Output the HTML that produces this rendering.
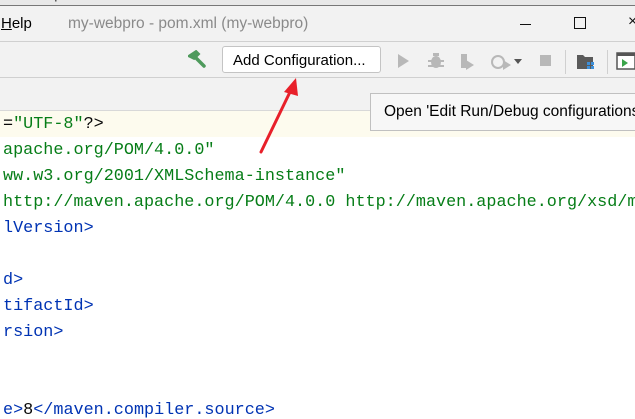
<!DOCTYPE html>
<html><head><meta charset="utf-8"><style>
*{margin:0;padding:0;box-sizing:border-box}
html,body{overflow:hidden}
body{width:635px;height:419px;background:#fff;position:relative;font-family:"Liberation Sans",sans-serif}
.abs{position:absolute}
.clip{position:absolute;left:0;top:111px;width:635px;height:308px;overflow:hidden}
.code{position:absolute;left:3px;top:1px;font-family:"Liberation Mono",monospace;font-size:16.8px;white-space:pre;line-height:26px}
.g{color:#067d17}.b{color:#0033b3}.k{color:#080808}
</style></head><body>
<div class="abs" style="left:0;top:0;width:635px;height:5px;background:#e8e8e8;overflow:hidden"><div style="position:absolute;top:-17px;left:0;font-size:17px;color:#555">is.com/posts/edit</div></div>
<div class="abs" style="left:0;top:5px;width:635px;height:1px;background:#777"></div>
<div class="abs" style="left:0;top:6px;width:635px;height:35px;background:#f2f2f2"></div>
<div class="abs" style="left:1px;top:15px;font-size:15px;color:#000"><u>H</u>elp</div>
<div class="abs" style="left:68px;top:15px;font-size:15.5px;color:#8a8a8a">my-webpro - pom.xml (my-webpro)</div>
<div class="abs" style="left:520px;top:24px;width:11px;height:1px;background:#111"></div>
<div class="abs" style="left:574px;top:17px;width:12px;height:12px;border:1.3px solid #111"></div>
<div class="abs" style="left:628px;top:13px;width:7px;overflow:hidden;font-size:16px;color:#111">×</div>
<div class="abs" style="left:0;top:41px;width:635px;height:1px;background:#d0d0d0"></div>
<div class="abs" style="left:0;top:42px;width:635px;height:35px;background:#f2f2f2"></div>
<svg class="abs" style="left:188px;top:50px" width="20" height="20"><path d="M2 6 L8 2 L10 4 L6 8 Z M6 6 L16 16" stroke="#4e9a5c" stroke-width="3.5" fill="#4e9a5c" stroke-linecap="round"/></svg>
<div class="abs" style="left:222px;top:46px;width:159px;height:27px;background:#fff;border:1px solid #c4c4c4;border-radius:3px;font-size:15px;padding:5px 0 0 10px;color:#000;white-space:nowrap">Add Configuration...</div>
<svg class="abs" style="left:395px;top:50px" width="240" height="24">
<path d="M3 4 L14 11 L3 18Z" fill="#b8b8b8"/>
<g fill="#b8b8b8"><ellipse cx="41" cy="12" rx="5" ry="6"/><rect x="33" y="10" width="16" height="2"/><rect x="33" y="15" width="16" height="2"/><rect x="38" y="3" width="6" height="3"/></g>
<path d="M66 4 h6 v14 h-6z" fill="#b8b8b8"/><path d="M71 10 L79 15 L71 20Z" fill="#b8b8b8"/>
<circle cx="103" cy="12" r="6" fill="none" stroke="#b8b8b8" stroke-width="2"/><path d="M108 10 L116 15 L108 20Z" fill="#b8b8b8"/>
<path d="M119 9 h8 l-4 5z" fill="#555"/>
<rect x="145" y="5" width="11" height="11" fill="#b8b8b8"/>
<rect x="170" y="0" width="1" height="24" fill="#d0d0d0"/>
<path d="M182 5 h6 l2 2 h8 v12 h-16z" fill="#5a5a5a"/><rect x="192" y="12" width="3" height="3" fill="#3d8fd9"/><rect x="196" y="12" width="3" height="3" fill="#3d8fd9"/><rect x="192" y="16" width="3" height="3" fill="#3d8fd9"/><rect x="196" y="16" width="3" height="3" fill="#3d8fd9"/>
<rect x="212" y="0" width="1" height="24" fill="#d0d0d0"/>
<rect x="222" y="3" width="18" height="16" fill="#fff" stroke="#555" stroke-width="1.5"/><rect x="222" y="3" width="18" height="3" fill="#555"/><path d="M227 9 L233 13 L227 17Z" fill="#3aa54a"/>
</svg>
<div class="abs" style="left:0;top:77px;width:635px;height:1px;background:#d0d0d0"></div>
<div class="abs" style="left:0;top:78px;width:635px;height:32px;background:#f2f2f2"></div>
<div class="abs" style="left:0;top:110px;width:635px;height:1px;background:#d8d8d8"></div>
<div class="abs" style="left:0;top:111px;width:635px;height:26px;background:#fdfbee"></div>
<div class="clip"><div class="code"><span class="k">=</span><span class="g">"UTF-8"</span><span class="k">?&gt;</span>
<span class="g">apache.org/POM/4.0.0"</span>
<span class="g">ww.w3.org/2001/XMLSchema-instance"</span>
<span class="g">http://maven.apache.org/POM/4.0.0 http://maven.apache.org/xsd/ma</span>
<span class="b">lVersion&gt;</span>

<span class="b">d&gt;</span>
<span class="b">tifactId&gt;</span>
<span class="b">rsion&gt;</span>


<span class="b">e&gt;</span><span class="k">8</span><span class="b">&lt;/maven.compiler.source&gt;</span></div></div>
<div class="abs" style="left:370px;top:93px;width:265px;height:38px;background:#f7f7f7;border:1px solid #c0c0c0;border-right:none;font-size:15.5px;padding:9px 0 0 13px;white-space:nowrap;overflow:hidden;color:#000">Open 'Edit Run/Debug configurations'</div>
<svg class="abs" style="left:0;top:0" width="635" height="419"><path d="M261 152 L290 92" stroke="#e8202a" stroke-width="3" stroke-linecap="round"/><path d="M296 78 L284 92 L298 96Z" fill="#e8202a"/></svg>
</body></html>
